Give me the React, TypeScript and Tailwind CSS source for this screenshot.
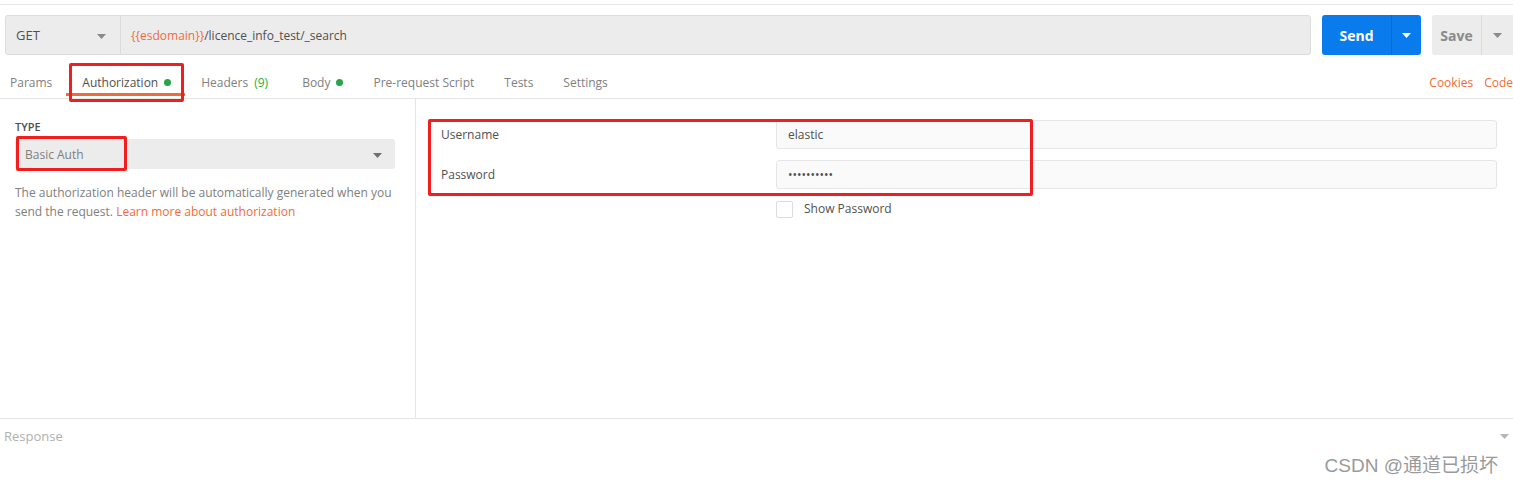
const Caret = ({ className }: { className: string }) => (
  <svg width="9" height="5" viewBox="0 0 9 5" className={className}>
    <path d="M0 0h9L4.5 5z" fill="currentColor" />
  </svg>
)

export default function App() {
  const tabs = [
    { label: "Params" },
    { label: "Authorization", active: true, dot: true },
    { label: "Headers", count: "(9)" },
    { label: "Body", dot: true },
    { label: "Pre-request Script" },
    { label: "Tests" },
    { label: "Settings" },
  ]

  return (
    <div className="relative w-[1513px] h-[484px] overflow-hidden bg-white text-[12px] text-[#505050] font-['Open_Sans',sans-serif]">
      <div className="h-[5px] border-b border-[#e6e6e6]" />

      {/* request bar */}
      <div className="flex h-[40px] mt-[10px] pl-[5px]">
        <div className="flex flex-1 bg-[#ececec] border border-[#dcdcdc] rounded-[3px]">
          <div className="w-[115px] flex items-center justify-between pl-[10px] pr-[14px] pt-[2px] border-r border-[#dcdcdc] text-[13px] text-[#505050]">
            GET
            <Caret className="text-[#8a8a8a]" />
          </div>
          <div className="flex items-center pl-[10px] pt-[2px] text-[12px] text-[#505050]">
            <span className="text-[#f26b3a]">{"{{esdomain}}"}</span>/licence_info_test/_search
          </div>
        </div>
        <div className="ml-[11px] w-[99px] flex bg-[#097bed] rounded-[3px] text-white">
          <div className="w-[69px] flex items-center justify-center text-[14px] font-bold">Send</div>
          <div className="flex-1 flex items-center justify-center border-l border-[#0868cc]">
            <Caret className="text-white" />
          </div>
        </div>
        <div className="ml-[11px] w-[81px] flex bg-[#ececec] rounded-l-[3px] text-[#8a8a8a]">
          <div className="w-[49px] flex items-center justify-center text-[14px] font-bold">Save</div>
          <div className="flex-1 flex items-center justify-center border-l border-[#dcdcdc]">
            <Caret className="text-[#8a8a8a]" />
          </div>
        </div>
      </div>

      {/* tabs */}
      <div className="flex h-[44px] border-b border-[#e6e6e6] pl-[10px] gap-[30px]">
        {tabs.map((t) => (
          <div
            key={t.label}
            className={`relative flex items-center pt-[12px] ${t.count ? "pr-[4px]" : ""} ${t.active ? "text-[#505050]" : "text-[#808080]"}`}
          >
            {t.label}
            {t.count && <span className="ml-[6px] text-[#26b13c]">{t.count}</span>}
            {t.dot && <span className="ml-[6px] w-[7px] h-[7px] rounded-full bg-[#26a44a]" />}
            {t.active && <span className="absolute -left-[16px] -right-[14px] bottom-[2px] h-[3px] bg-[#f26b3a]" />}
          </div>
        ))}
        <div className="ml-auto flex items-center pt-[12px] gap-[11px] text-[#f26b3a]">
          <span>Cookies</span>
          <span>Code</span>
        </div>
      </div>

      {/* auth body */}
      <div className="flex h-[320px] border-b border-[#e6e6e6]">
        <div className="w-[416px] border-r border-[#e6e6e6] px-[15px] pt-[20px]">
          <div className="text-[11px] leading-[15px] font-semibold text-[#505050]">TYPE</div>
          <div className="mt-[5px] w-[380px] h-[30px] flex items-center justify-between bg-[#ececec] rounded-[3px] pl-[10px] pr-[13px] pt-[2px] text-[#808080]">
            Basic Auth
            <Caret className="text-[#6f6f6f]" />
          </div>
          <div className="mt-[14px] leading-[19px] text-[#808080] whitespace-nowrap">
            The authorization header will be automatically generated when you
            <br />
            send the request. <span className="text-[#f26b3a]">Learn more about authorization</span>
          </div>
        </div>

        <div className="flex-1 pl-[25px] pr-[16px] pt-[20px]">
          <div className="flex flex-col gap-[10px]">
            <div className="flex items-center h-[30px] pt-[1px]">
              <div className="w-[335px]">Username</div>
              <div className="flex-1 h-full flex items-center px-[11px] bg-[#fafafa] border border-[#e6e6e6] rounded-[3px]">elastic</div>
            </div>
            <div className="flex items-center h-[30px] pt-[1px]">
              <div className="w-[335px]">Password</div>
              <div className="flex-1 h-full flex items-center px-[11px] bg-[#fafafa] border border-[#e6e6e6] rounded-[3px] text-[12px]">
                ••••••••••
              </div>
            </div>
          </div>
          <div className="mt-[11px] ml-[335px] flex items-center">
            <span className="w-[17px] h-[17px] border border-[#dcdcdc] rounded-[2px] bg-white" />
            <span className="ml-[11px]">Show Password</span>
          </div>
        </div>
      </div>

      {/* response */}
      <div className="flex items-center justify-between pl-[4px] pr-[4px] pt-[8px]">
        <span className="text-[13px] text-[#b0b0b0]">Response</span>
        <Caret className="text-[#b5b5b5]" />
      </div>

      {/* watermark */}
      <div className="absolute top-[452px] right-[15px] text-[19px] text-[#9a9a9a] font-['Liberation_Sans','Noto_Sans_CJK_SC',sans-serif]">
        CSDN @通道已损坏
      </div>

      {/* annotation boxes */}
      <div className="absolute left-[69px] top-[63px] w-[115px] h-[39px] border-[3px] border-[#f21d1d] rounded-[2px]" />
      <div className="absolute left-[16px] top-[136px] w-[111px] h-[35px] border-[3px] border-[#f21d1d] rounded-[2px]" />
      <div className="absolute left-[428px] top-[119px] w-[605px] h-[77px] border-[3px] border-[#f21d1d] rounded-[2px]" />
    </div>
  )
}
